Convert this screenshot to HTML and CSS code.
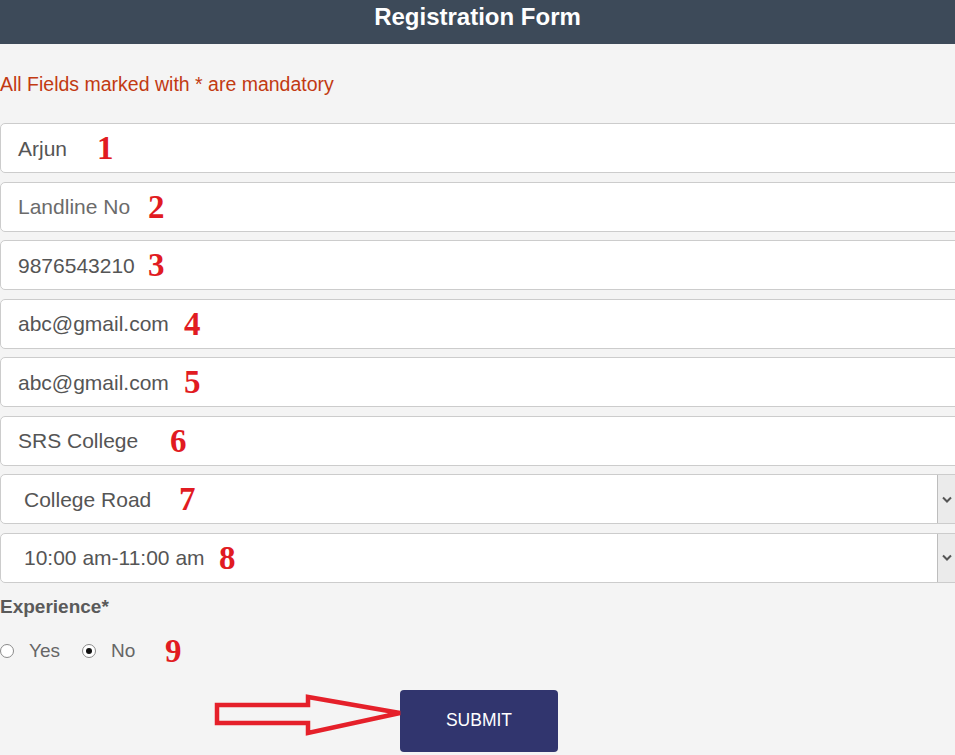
FILE: index.html
```html
<!DOCTYPE html>
<html>
  <head>
    <meta charset="UTF-8">
    <title>Registration Form</title>
    <link rel="stylesheet" href="styles.css">
  </head>
  <body>
    <div id="titles">
      <h1>Registration Form</h1>
    </div>

    <div id="registration">
      <p class="notice">All Fields marked with * are mandatory</p>

      <div class="fields">
        <div class="field">Arjun<span class="mark mark-1">1</span></div>
        <div class="field placeholder">Landline No<span class="mark mark-2">2</span></div>
        <div class="field">9876543210<span class="mark mark-3">3</span></div>
        <div class="field">abc@gmail.com<span class="mark mark-4">4</span></div>
        <div class="field">abc@gmail.com<span class="mark mark-5">5</span></div>
        <div class="field">SRS College<span class="mark mark-6">6</span></div>
        <div class="field select">
          College Road<span class="mark mark-7">7</span>
          <span class="drop">
            <svg width="10" height="7" viewBox="0 0 10 7"><path d="M1 1.5 L5 5.5 L9 1.5" fill="none" stroke="#555" stroke-width="2"/></svg>
          </span>
        </div>
        <div class="field select">
          10:00 am-11:00 am<span class="mark mark-8">8</span>
          <span class="drop">
            <svg width="10" height="7" viewBox="0 0 10 7"><path d="M1 1.5 L5 5.5 L9 1.5" fill="none" stroke="#555" stroke-width="2"/></svg>
          </span>
        </div>
      </div>

      <div class="label">Experience*</div>
      <div class="radios">
        <span class="radio"></span>
        <span class="radio-text">Yes</span>
        <span class="radio checked"></span>
        <span class="radio-text">No</span>
        <span class="mark mark-9">9</span>
      </div>

      <div class="actions">
        <svg class="arrow" width="195" height="46" viewBox="0 0 195 46">
          <polygon points="5,13 96,13 96,5 188,21 96,41 96,31 5,31" fill="none" stroke="#e5202a" stroke-width="4.5" stroke-linejoin="miter"/>
        </svg>
        <button>SUBMIT</button>
      </div>
    </div>
  </body>
</html>
```

FILE: styles.css
```css
html, body {
  margin: 0;
  overflow: hidden;
}

body {
  background: #f4f4f4;
  font-family: 'Liberation Sans', Arial, sans-serif;
  color: #555;
}

#titles {
  background: #3d4a59;
  height: 44px;
  padding-top: 2px;
  box-sizing: border-box;
  text-align: center;
}

#titles h1 {
  margin: 0;
  color: #fff;
  font-size: 24px;
  line-height: 30px;
  font-weight: bold;
}

#registration {
  width: 960px;
}

.notice {
  margin: 30px 0 0 0;
  color: #c23a12;
  font-size: 19.5px;
  line-height: 20px;
}

.fields {
  display: flex;
  flex-direction: column;
  gap: 8.5px;
  margin-top: 29px;
}

.field {
  position: relative;
  height: 50px;
  box-sizing: border-box;
  display: flex;
  align-items: center;
  padding-left: 17px;
  padding-top: 1px;
  background: #fff;
  border: 1px solid #ccc;
  border-radius: 5px;
  font-size: 21px;
  color: #555;
}

.field.placeholder {
  color: #6b6b6b;
}

.field.select {
  padding-left: 23px;
}

.drop {
  position: absolute;
  top: 0;
  bottom: 0;
  left: 936px;
  width: 24px;
  display: flex;
  align-items: center;
  padding-left: 4px;
  box-sizing: border-box;
  background: #ebebeb;
  border-left: 1px solid #bdbdbd;
}

.mark {
  position: absolute;
  top: 50%;
  transform: translateY(-50%);
  font-family: 'Liberation Serif', 'Times New Roman', serif;
  font-weight: bold;
  font-size: 33px;
  line-height: 1;
  color: #e11b22;
}

.mark-1 { left: 96px; }
.mark-2 { left: 147px; }
.mark-3 { left: 147px; }
.mark-4 { left: 183px; }
.mark-5 { left: 183px; }
.mark-6 { left: 169px; }
.mark-7 { left: 178px; }
.mark-8 { left: 218px; }
.mark-9 { left: 165px; }

.label {
  margin-top: 13px;
  font-size: 19px;
  line-height: 22px;
  font-weight: bold;
  color: #5a5a5a;
}

.radios {
  position: relative;
  display: flex;
  align-items: center;
  margin-top: 22px;
  height: 22px;
  font-size: 19px;
  color: #666;
}

.radio {
  width: 14px;
  height: 14px;
  box-sizing: border-box;
  border: 1px solid #8a8a8a;
  border-radius: 50%;
  background: #fff;
  display: flex;
  align-items: center;
  justify-content: center;
}

.radio.checked::after {
  content: '';
  width: 6px;
  height: 6px;
  border-radius: 50%;
  background: #111;
}

.radio-text {
  margin: 0 22px 0 15px;
}

.actions {
  position: relative;
  margin-top: 28px;
  width: 958px;
  text-align: center;
}

.arrow {
  position: absolute;
  left: 212px;
  top: 2px;
}

.actions button {
  width: 158px;
  height: 62px;
  border: none;
  border-radius: 4px;
  background: #31356e;
  color: #fff;
  font-family: 'Liberation Sans', Arial, sans-serif;
  font-size: 17.5px;
  cursor: pointer;
}
```
